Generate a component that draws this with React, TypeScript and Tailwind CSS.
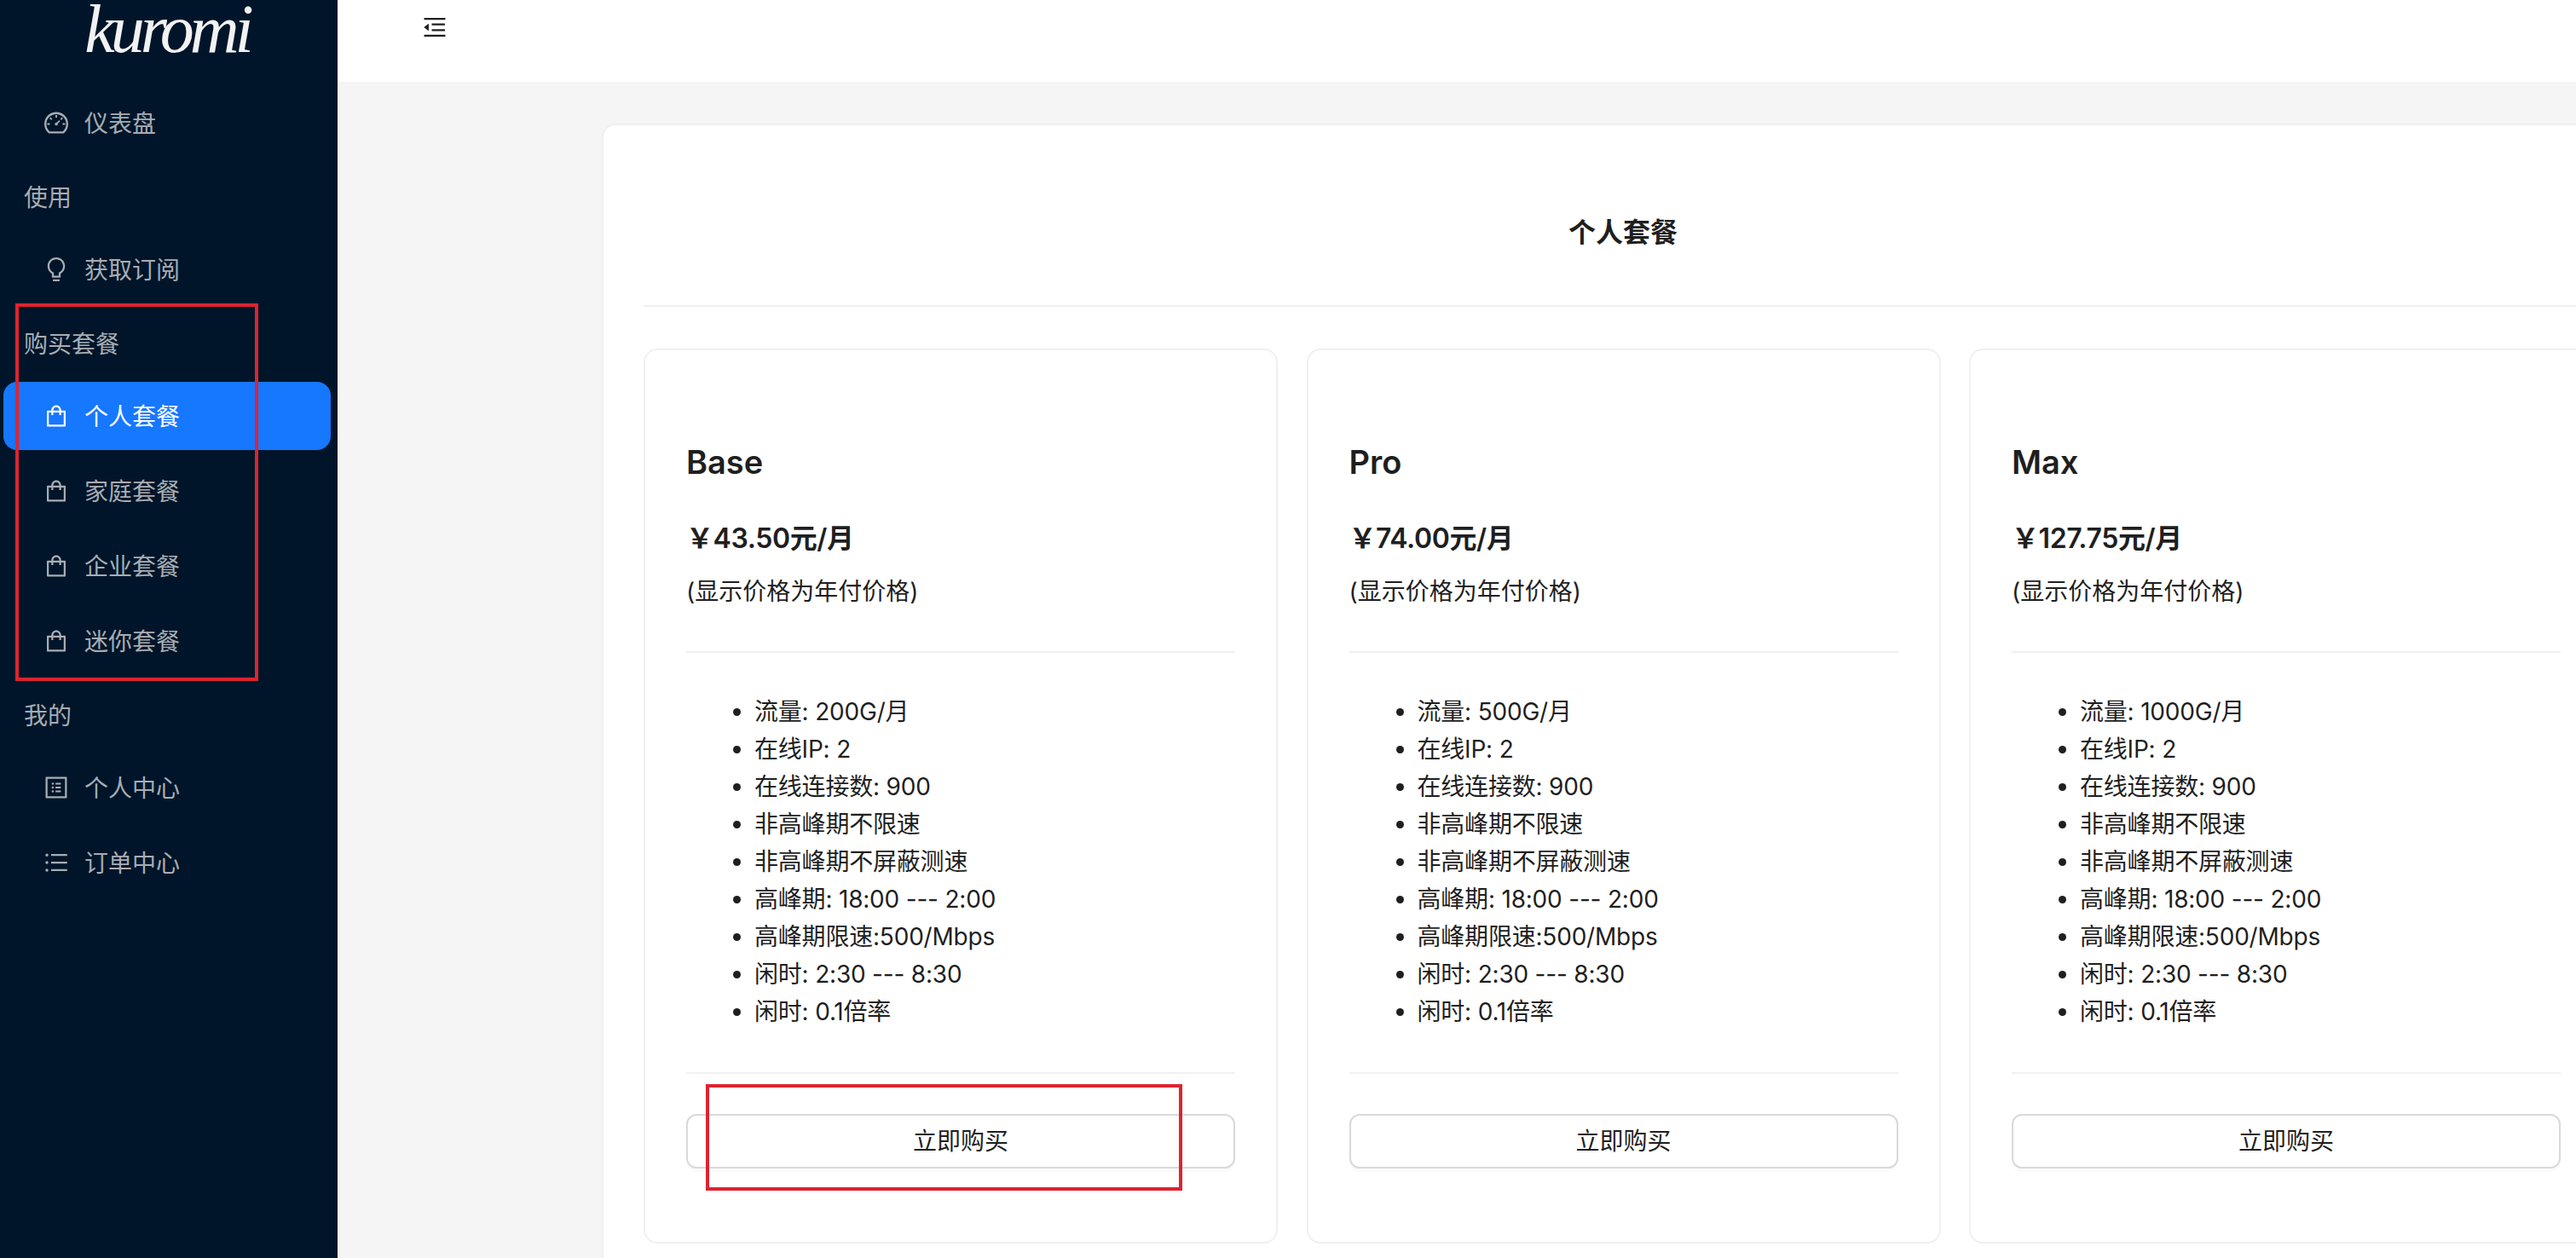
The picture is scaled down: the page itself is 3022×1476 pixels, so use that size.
import React from 'react';
import {
  AiOutlineBulb,
  AiOutlineDashboard,
  AiOutlineMenuFold,
  AiOutlineProfile,
  AiOutlineShopping,
  AiOutlineUnorderedList,
} from 'react-icons/ai';

type MenuItemProps = { icon: React.ReactNode; label: string; active?: boolean };

const MenuItem: React.FC<MenuItemProps> = ({ icon, label, active }) => (
  <div
    className={`mx-[4px] h-[80px] w-[384px] flex items-center gap-[17px] pl-[46px] rounded-[16px] text-[28px] ${
      active ? 'bg-[#1677ff] text-white' : 'text-[#a6adb4]'
    }`}
  >
    <span className="text-[32px] shrink-0">{icon}</span>
    <span className="pt-[2px]">{label}</span>
  </div>
);

const GroupTitle: React.FC<{ label: string }> = ({ label }) => (
  <div className="h-[92px] flex items-center pl-[28px] pt-[3px] text-[28px] text-[#a6adb4]">{label}</div>
);

type Plan = { name: string; price: string; traffic: string };

const plans: Plan[] = [
  { name: 'Base', price: '43.50', traffic: '200G' },
  { name: 'Pro', price: '74.00', traffic: '500G' },
  { name: 'Max', price: '127.75', traffic: '1000G' },
];

const PlanCard: React.FC<{ plan: Plan }> = ({ plan }) => {
  const features = [
    `流量: ${plan.traffic}/月`,
    '在线IP: 2',
    '在线连接数: 900',
    '非高峰期不限速',
    '非高峰期不屏蔽测速',
    '高峰期: 18:00 --- 2:00',
    '高峰期限速:500/Mbps',
    '闲时: 2:30 --- 8:30',
    '闲时: 0.1倍率',
  ];
  return (
    <div className="w-[744px] h-[1050px] shrink-0 border-2 border-[#f0f0f0] rounded-[16px] bg-white px-[48px] text-[#1f1f1f]">
      <h3 className="mt-[105px] h-[52px] leading-[52px] text-[38px] font-semibold">{plan.name}</h3>
      <div className="mt-[42px] h-[44px] leading-[44px] text-[32px] font-semibold tracking-[-0.4px]">￥{plan.price}元/月</div>
      <div className="mt-[18px] h-[44px] leading-[44px] text-[28px]">(显示价格为年付价格)</div>
      <div className="mt-[48px] border-t-2 border-[#f0f0f0]" />
      <ul className="mt-[47px] pl-[80px] list-disc text-[28px] leading-[44px] tracking-[-0.2px]">
        {features.map((f) => (
          <li key={f}>{f}</li>
        ))}
      </ul>
      <div className="mt-[49px] border-t-2 border-[#f0f0f0]" />
      <button className="mt-[47px] w-full h-[64px] border-2 border-[#d9d9d9] rounded-[12px] bg-white text-[28px] text-[#1f1f1f] shadow-[0_4px_0_rgba(0,0,0,0.02)]">
        立即购买
      </button>
    </div>
  );
};

export default function App() {
  return (
    <div className="relative w-[3022px] h-[1476px] overflow-hidden flex bg-[#f5f5f5] font-['Inter','Noto_Sans_CJK_SC',sans-serif]">
      <aside className="w-[396px] shrink-0 bg-[#001529]">
        <div className="h-[104px] flex justify-center pr-[4px]">
          <span className="h-fit leading-[68px] text-[80px] tracking-[-5px] italic text-[#f2f2f2] font-['Liberation_Serif',serif]">
            kuromi
          </span>
        </div>
        <MenuItem icon={<AiOutlineDashboard />} label="仪表盘" />
        <GroupTitle label="使用" />
        <MenuItem icon={<AiOutlineBulb />} label="获取订阅" />
        <GroupTitle label="购买套餐" />
        <div className="flex flex-col gap-[8px]">
          <MenuItem icon={<AiOutlineShopping />} label="个人套餐" active />
          <MenuItem icon={<AiOutlineShopping />} label="家庭套餐" />
          <MenuItem icon={<AiOutlineShopping />} label="企业套餐" />
          <MenuItem icon={<AiOutlineShopping />} label="迷你套餐" />
        </div>
        <GroupTitle label="我的" />
        <div className="flex flex-col gap-[8px]">
          <MenuItem icon={<AiOutlineProfile />} label="个人中心" />
          <MenuItem icon={<AiOutlineUnorderedList />} label="订单中心" />
        </div>
      </aside>

      <div className="flex-1 min-w-0 flex flex-col">
        <header className="h-[96px] shrink-0 bg-white pl-[98px] pt-[16px]">
          <AiOutlineMenuFold className="text-[32px] text-[#1f1f1f]" />
        </header>
        <main className="flex-1 pl-[310px] pt-[49px]">
          <div className="w-[2396px] h-[1400px] bg-white border-2 border-[#f0f0f0] rounded-[16px] px-[47px]">
            <div className="h-[213px] border-b-2 border-[#f0f0f0] pt-[104px] text-center text-[32px] leading-[44px] font-semibold text-[#1f1f1f]">
              个人套餐
            </div>
            <div className="mt-[49px] flex gap-[33.5px]">
              {plans.map((p) => (
                <PlanCard key={p.name} plan={p} />
              ))}
            </div>
          </div>
        </main>
      </div>

      {/* red annotation boxes drawn over the screenshot */}
      <div className="absolute left-[18px] top-[356px] w-[285px] h-[443px] border-4 border-[#dc2430]" />
      <div className="absolute left-[828px] top-[1272px] w-[559px] h-[125px] border-4 border-[#dc2430]" />
    </div>
  );
}
